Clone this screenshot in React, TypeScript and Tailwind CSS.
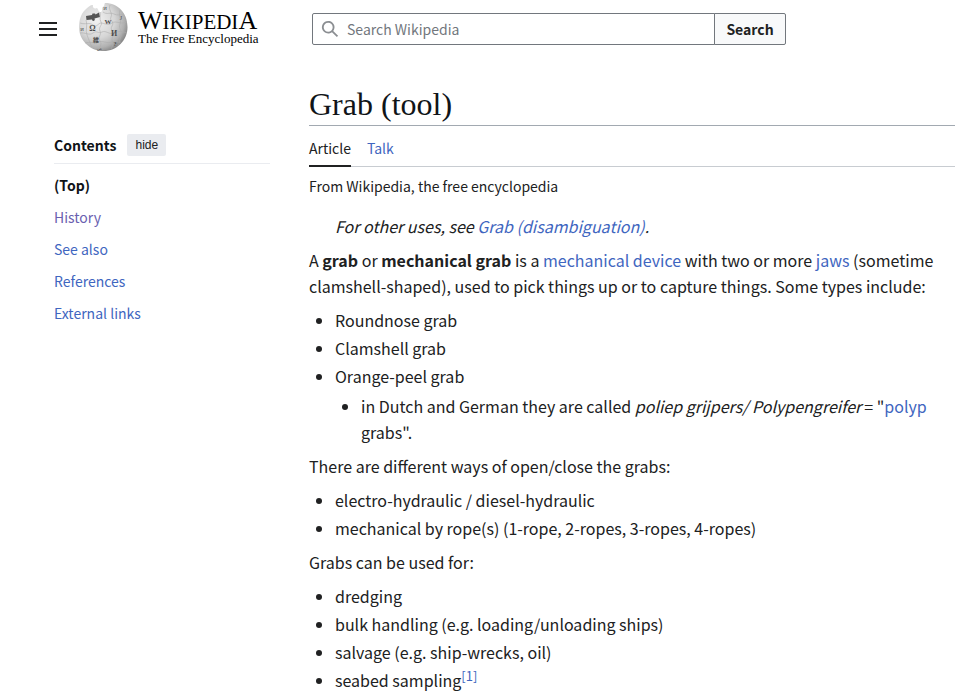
import type { ReactNode } from "react";

const tocItems = [
  { label: "History", visited: true },
  { label: "See also", visited: false },
  { label: "References", visited: false },
  { label: "External links", visited: false },
];

function WikiLink({ children }: { children: ReactNode }) {
  return (
    <a href="#" className="text-[#3f66c0] hover:underline">
      {children}
    </a>
  );
}

function BulletList({ children, nested = false }: { children: ReactNode; nested?: boolean }) {
  return (
    <ul className={`flex list-disc flex-col gap-0.5 ${nested ? "mt-1" : "mt-2"} pl-[26px]`}>
      {children}
    </ul>
  );
}

function Globe() {
  return (
    <svg viewBox="0 0 50 50" className="size-[50px] shrink-0" aria-hidden="true">
      <defs>
        <radialGradient id="sphere" cx="0.36" cy="0.36" r="0.68">
          <stop offset="0" stopColor="#f2f2f2" />
          <stop offset="0.55" stopColor="#d6d6d6" />
          <stop offset="0.85" stopColor="#b0b0b0" />
          <stop offset="1" stopColor="#8a8a8a" />
        </radialGradient>
      </defs>
      <path
        d="M7 9 C10 6 12 4 15 4 C14 7 17 8 19 7 C21 9 20 11 23 11 C25 10 23 7 25 6 C27 5 26 3 27 2 C40 2 49.500 12 49.500 26 C49.500 39.500 39 50 25.500 50 C12 50 1 39.500 1 26 C1 19 3 13 7 9Z"
        fill="url(#sphere)"
      />
      <path
        d="M8 15 L14 14 L14.500 12.500 L17 12.500 L17.500 13.500 L21 11.500 L22 16 L16.500 17.500 C18 20 14 21 14 18.500 L8.500 19Z"
        fill="#555"
      />
      <g fill="none" stroke="#adadad" strokeWidth="0.6">
        <path d="M22 11 C23 15 21 18 23 21 S20 26 22 30 S19 36 22 40 S20 46 22 50" />
        <path d="M32 4 C30 9 35 12 33 16 S37 20 34 25 S38 30 35 35 S37 42 33 48" />
        <path d="M42 9 C40 15 44 18 42 23 S45 30 43 35 S42 41 40 45" />
        <path d="M8 19 C10 25 7 29 9 34 S12 42 14 46" />
        <path d="M2 22 C8 24 11 21 15 24 S20 22 23 22 S30 25 34 22 S43 24 49 21" />
        <path d="M2 32 C7 31 11 35 15 32 S20 33 24 31 S31 34 36 32 S43 30 49 32" />
        <path d="M7 42 C12 40 16 43 20 41 S29 43 34 41 S39 42 43 41" />
        <path d="M25 11 C29 14 32 11 36 13 S42 13 46 14" />
      </g>
      <g
        fill="#4b4b4b"
        fontFamily="'Liberation Serif', 'Noto Sans CJK JP', serif"
        textAnchor="middle"
      >
        <text x="14.500" y="30" fontSize="8" fontWeight="bold">Ω</text>
        <text x="30" y="23" fontSize="7" fontWeight="bold">W</text>
        <text x="36" y="35" fontSize="8" fontWeight="bold">И</text>
        <text x="18" y="41" fontSize="6" fontWeight="bold">維</text>
        <text x="27" y="9" fontSize="5">И</text>
        <text x="43" y="19" fontSize="6">J</text>
        <text x="37" y="45" fontSize="6" fontWeight="bold">?</text>
        <text x="4" y="30" fontSize="5">Й</text>
        <text x="21" y="49" fontSize="4">ص</text>
      </g>
    </svg>
  );
}

function Header() {
  return (
    <header className="flex items-start gap-[54px] pl-[38px]">
      <div className="flex items-start gap-5">
        <button type="button" aria-label="Main menu" className="mt-[19px]">
          <svg viewBox="0 0 20 20" className="size-5" fill="#202122" aria-hidden="true">
            <path d="M1 3v2h18V3zm0 8h18V9H1zm0 6h18v-2H1z" />
          </svg>
        </button>
        <a href="#" className="mt-px flex w-[180px] items-start gap-[10px] text-black">
          <Globe />
          <span className="flex flex-col whitespace-nowrap pt-[9px] font-['Liberation_Serif',serif]">
            <span className="text-[21px] leading-[22px]">
              <span className="text-[26px]">W</span>IKIPEDI<span className="text-[26px]">A</span>
            </span>
            <span className="text-[13px] leading-3">The Free Encyclopedia</span>
          </span>
        </a>
      </div>
      <form className="mt-[13px] flex h-8 w-[474px]" onSubmit={(e) => e.preventDefault()}>
        <label className="flex grow items-center gap-2 rounded-l-xs border border-[#72777d] pl-2">
          <svg viewBox="0 0 20 20" className="size-[18px] shrink-0" fill="#8b8e92" aria-hidden="true">
            <path d="M12.200 13.600a7 7 0 1 1 1.400-1.400l5.400 5.400-1.400 1.400zM3 8a5 5 0 1 0 10 0A5 5 0 0 0 3 8" />
          </svg>
          <input
            type="text"
            aria-label="Search Wikipedia"
            placeholder="Search Wikipedia"
            className="w-full bg-transparent text-sm outline-none placeholder:text-[#72777d]"
          />
        </label>
        <button
          type="submit"
          className="-ml-px w-[72px] rounded-r-xs border border-[#72777d] bg-[#f8f9fa] text-sm font-bold"
        >
          Search
        </button>
      </form>
    </header>
  );
}

function Contents() {
  return (
    <nav aria-label="Contents" className="w-[216px] shrink-0 pt-[54px] text-sm">
      <div className="flex items-center gap-[11px] border-b border-[#eaecf0] pb-[7px]">
        <h2 className="font-bold text-[#101418]">Contents</h2>
        <button
          type="button"
          className="h-[22px] w-[39px] rounded-xs bg-[#eaecf0] font-['Liberation_Sans',sans-serif] text-xs"
        >
          hide
        </button>
      </div>
      <ul className="mt-[11px] flex flex-col gap-3">
        <li>
          <a href="#" className="font-bold text-[#101418]">
            (Top)
          </a>
        </li>
        {tocItems.map((item) => (
          <li key={item.label}>
            <a href="#" className={item.visited ? "text-[#6a60b0]" : "text-[#3f66c0]"}>
              {item.label}
            </a>
          </li>
        ))}
      </ul>
    </nav>
  );
}

function Article() {
  return (
    <main className="min-w-0 grow pt-1">
      <h1 className="border-b border-[#a2a9b1] pb-px font-['Liberation_Serif',serif] text-[32px] leading-10 text-[#101418]">
        Grab (tool)
      </h1>
      <nav
        aria-label="Namespaces"
        className="flex gap-4 border-b border-[#c8ccd1] text-sm leading-[22px]"
      >
        <a href="#" className="-mb-px border-b-2 border-[#202122] pt-[11px] pb-[6px]">
          Article
        </a>
        <a href="#" className="pt-[11px] pb-[6px] text-[#3f66c0]">
          Talk
        </a>
      </nav>
      <div className="mt-2 text-sm leading-[22px]">From Wikipedia, the free encyclopedia</div>
      <div className="mt-4 text-base leading-[26px]">
        <div className="pl-[26px] italic">
          For other uses, see <WikiLink>Grab (disambiguation)</WikiLink>.
        </div>
        <p className="mt-2">
          A <b>grab</b> or <b>mechanical grab</b> is a <WikiLink>mechanical device</WikiLink> with two
          or more <WikiLink>jaws</WikiLink> (sometime clamshell-shaped), used to pick things up or to
          capture things. Some types include:
        </p>
        <BulletList>
          <li>Roundnose grab</li>
          <li>Clamshell grab</li>
          <li>
            Orange-peel grab
            <BulletList nested>
              <li>
                in Dutch and German they are called{" "}
                <i className="pr-[3px]">poliep grijpers/ Polypengreifer</i>= "
                <WikiLink>polyp</WikiLink> grabs".
              </li>
            </BulletList>
          </li>
        </BulletList>
        <p className="mt-2">There are different ways of open/close the grabs:</p>
        <BulletList>
          <li>electro-hydraulic / diesel-hydraulic</li>
          <li>mechanical by rope(s) (1-rope, 2-ropes, 3-ropes, 4-ropes)</li>
        </BulletList>
        <p className="mt-2">Grabs can be used for:</p>
        <BulletList>
          <li>dredging</li>
          <li>bulk handling (e.g. loading/unloading ships)</li>
          <li>salvage (e.g. ship-wrecks, oil)</li>
          <li>
            seabed sampling
            <sup className="text-[13px] leading-none">
              <WikiLink>[1]</WikiLink>
            </sup>
          </li>
        </BulletList>
      </div>
    </main>
  );
}

export default function App() {
  return (
    <div className="min-h-screen bg-white font-['Noto_Sans_CJK_SC',sans-serif] text-[#202122]">
      <Header />
      <div className="mt-[29px] flex gap-[39px] pl-[54px]">
        <Contents />
        <Article />
      </div>
    </div>
  );
}
